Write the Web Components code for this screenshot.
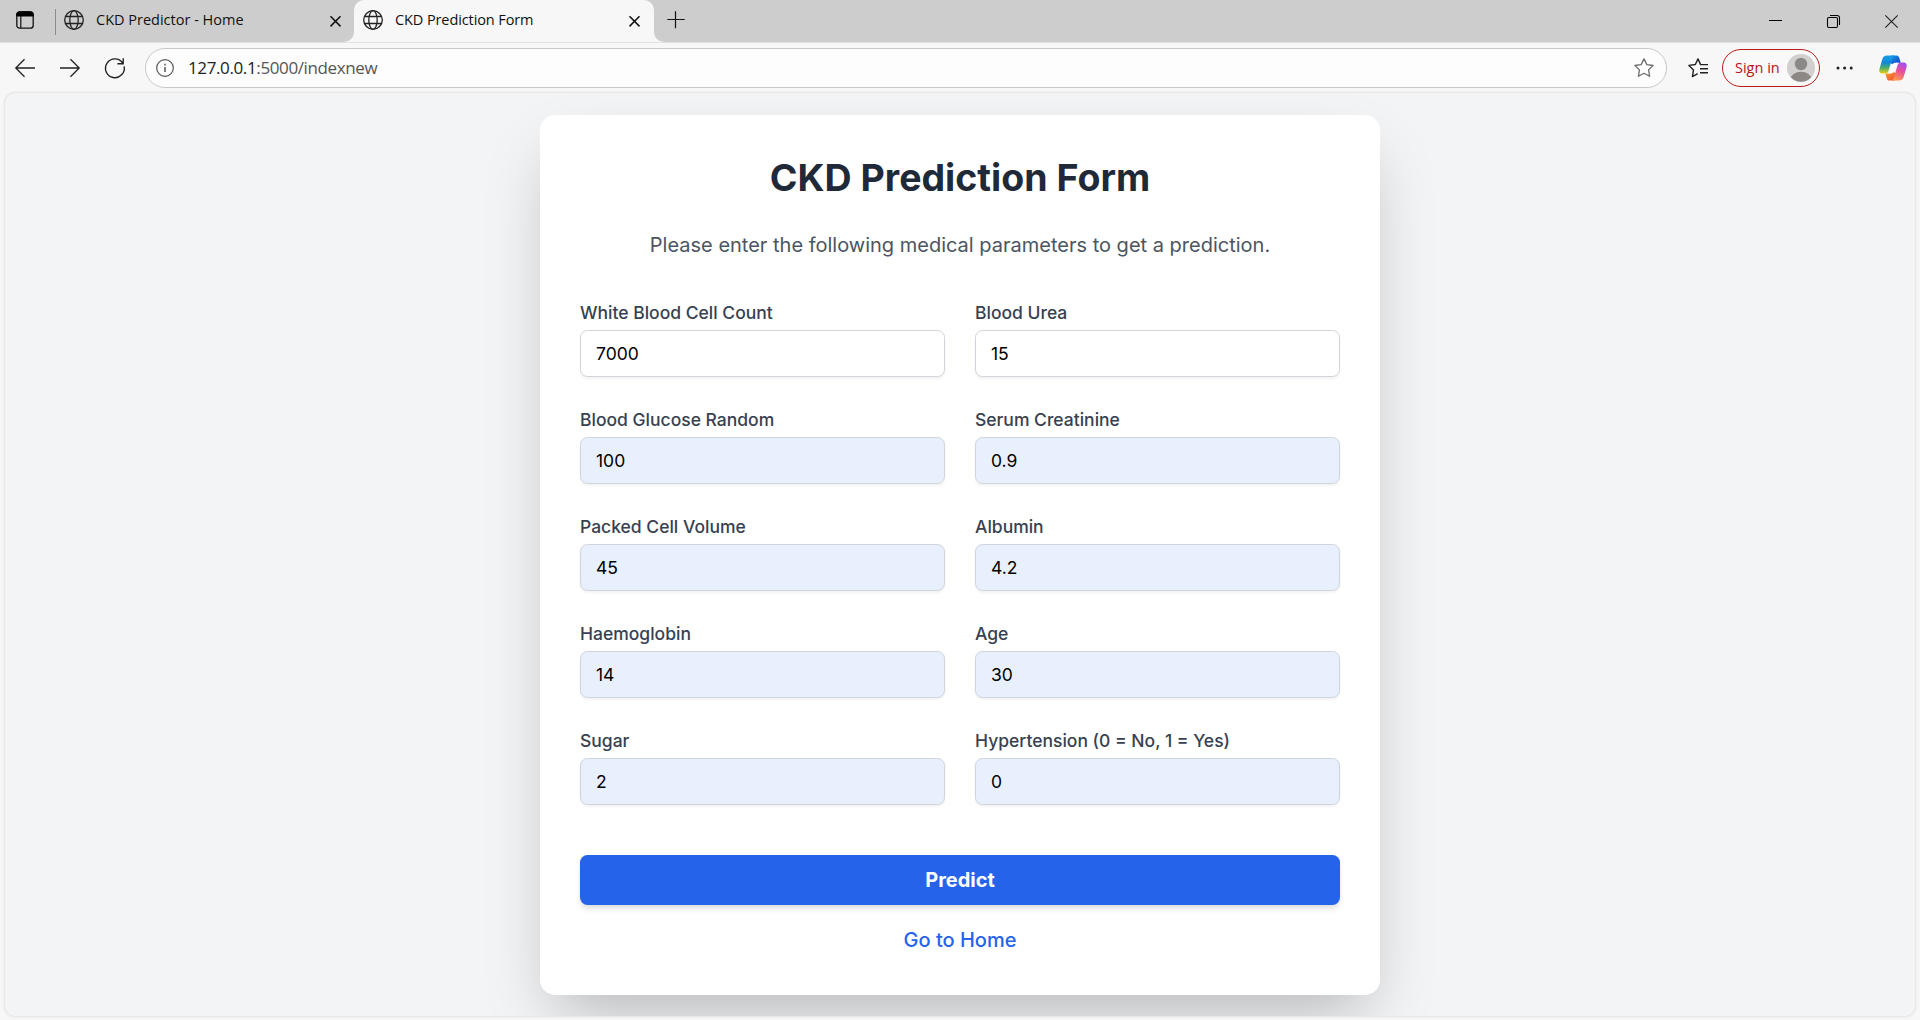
<!DOCTYPE html>
<html lang="en">
<head>
<meta charset="utf-8">
<title>CKD Prediction Form</title>
<style>
html,body{margin:0;height:100%;overflow:hidden;background:#f7f7f7}
</style>
</head>
<body>
<browser-window>
  <tab-strip slot="tabs">
    <browser-tab>CKD Predictor - Home</browser-tab>
    <browser-tab active>CKD Prediction Form</browser-tab>
  </tab-strip>
  <tool-bar slot="toolbar"><address-bar><span slot="host">127.0.0.1</span>:5000/indexnew</address-bar></tool-bar>
  <prediction-card>
    <span slot="title">CKD Prediction Form</span>
    <span slot="intro">Please enter the following medical parameters to get a prediction.</span>
    <form-field label="White Blood Cell Count">7000</form-field>
    <form-field label="Blood Urea">15</form-field>
    <form-field label="Blood Glucose Random" filled>100</form-field>
    <form-field label="Serum Creatinine" filled>0.9</form-field>
    <form-field label="Packed Cell Volume" filled>45</form-field>
    <form-field label="Albumin" filled>4.2</form-field>
    <form-field label="Haemoglobin" filled>14</form-field>
    <form-field label="Age" filled>30</form-field>
    <form-field label="Sugar" filled>2</form-field>
    <form-field label="Hypertension (0 = No, 1 = Yes)" filled>0</form-field>
    <submit-button slot="actions">Predict</submit-button>
    <home-link slot="actions">Go to Home</home-link>
  </prediction-card>
</browser-window>
<script>
const define = (name, markup, ready) => customElements.define(name, class extends HTMLElement {
  constructor() {
    super();
    this.attachShadow({mode: 'open'}).innerHTML = '<style>:host{display:block;box-sizing:border-box}*{box-sizing:border-box}svg{display:block;flex:none;overflow:visible}</style>' + markup;
  }
  connectedCallback() { if (ready) ready(this, this.shadowRoot); }
});

define('browser-window', `
<style>
:host{display:flex;flex-direction:column;width:1920px;height:1020px;background:#f7f7f7;font-family:"Open Sans","Noto Sans",sans-serif}
main{margin:0 5px 4px;flex:1;min-height:0;display:flex;align-items:flex-start;justify-content:center;padding-top:22px;background:#f3f4f6;border-radius:10px;overflow:hidden;box-shadow:0 0 2px 1px #e2e2e2}
</style>
<slot name="tabs"></slot><slot name="toolbar"></slot><main><slot></slot></main>`);

define('tab-strip', `
<style>
:host{display:flex;height:42px;background:#f7f7f7}
.lead{display:flex;align-items:center;width:56px;background:#cdcdcd;padding:0 0 2px 16px}
.lead i{width:1px;height:26px;background:#8b8b8b;margin:3px 0 0 21px}
.rest{flex:1;background:#cdcdcd;border-bottom-left-radius:10px;display:flex;padding:11px 0 0 13px}
.controls{display:flex;margin-left:auto;gap:45px;padding:4px 22px 0 0}
</style>
<div class="lead"><svg width="18" height="18" viewBox="0 0 18 18"><rect x=".8" y=".8" width="16.4" height="16.4" rx="2.8" fill="none" stroke="#111" stroke-width="1.3"/><path d="M.8 5V3.5A2.7 2.7 0 0 1 3.5.8h11a2.7 2.7 0 0 1 2.7 2.7V5z" fill="#000" stroke="#000"/><path d="M4.8 5v12" stroke="#111" stroke-width="1.2"/></svg><i></i></div>
<slot></slot>
<div class="rest"><svg width="18" height="18" viewBox="0 0 18 18"><path d="M8.5 .3v17M.3 8.5h17.4" stroke="#111" stroke-width="1.2"/></svg>
<div class="controls">
<svg width="13" height="13"><path d="M0 5.5h13" stroke="#000"/></svg>
<svg width="13" height="13" viewBox="0 0 13 13"><rect x=".5" y="2.5" width="10" height="10" rx="1.4" fill="none" stroke="#000" stroke-width="1.1"/><path d="M3 .5h7.2a2.3 2.3 0 0 1 2.3 2.3V10" fill="none" stroke="#000" stroke-width="1.1"/></svg>
<svg width="13" height="13" viewBox="0 0 13 13"><path d="m.3.3 12.4 12.4m0-12.4L.3 12.7" stroke="#222" stroke-width="1.1"/></svg>
</div></div>`);

define('browser-tab', `
<style>
:host{display:flex;width:298px;background:#cdcdcd;border-bottom-right-radius:10px;letter-spacing:0}
:host([active]){width:300px;border-radius:0;background:linear-gradient(#cdcdcd 50%,#f7f7f7 50%);letter-spacing:-.1px}
.tab{flex:1;display:flex;align-items:flex-start;padding:10px 13px 0 8px}
:host([active]) .tab{background:#f7f7f7;border-radius:10px 10px 0 0;padding-left:9px;padding-right:14px}
p{margin:0 auto 0 12px;font-size:14.5px;line-height:20px;color:#111;white-space:nowrap}
.x{margin-top:6px}
</style>
<div class="tab">
<svg width="20" height="20" viewBox="0 0 20 20" fill="none" stroke="#222" stroke-width="1.3"><circle cx="10" cy="10" r="9.3"/><ellipse cx="10" cy="10" rx="4.2" ry="9.3"/><path d="M1.7 6.5h16.6M1.7 13.5h16.6"/></svg>
<p><slot></slot></p>
<svg class="x" width="11" height="11" viewBox="0 0 11 11"><path d="m.5.2 10 10.2m0-10.2L.5 10.4" stroke="#111" stroke-width="1.5"/></svg>
</div>`);

define('tool-bar', `
<style>
:host{display:flex;align-items:center;height:51px;padding:0 13px 0 15px;border-top:1px solid #e2e2e2}
.nav{display:flex;gap:25px;margin-right:20px}
.fav{margin:0 14px 0 21px}
.sign{display:flex;align-items:center;justify-content:space-between;width:98px;height:38px;border:1px solid #b91c1c;border-radius:19px;padding:0 4px 0 12px;color:#b3141b;font-size:14.5px;white-space:nowrap;background:#f9f9f9}
.sign span{padding-bottom:2px}
.dots{margin:0 26px 0 16px}
</style>
<div class="nav">
<svg width="20" height="20" viewBox="0 0 20 20" fill="none" stroke="#222" stroke-width="1.3"><path d="M20 10H.8M9.5 1.3.8 10l8.7 8.7"/></svg>
<svg width="20" height="20" viewBox="0 0 20 20" fill="none" stroke="#222" stroke-width="1.3"><path d="M0 10h19.2M10.5 1.3l8.7 8.7-8.7 8.7"/></svg>
<svg width="20" height="20" viewBox="0 0 20 20" fill="none" stroke="#222" stroke-width="1.4"><path d="M19.1 8.3A9.4 9.4 0 1 1 17.7 5M18.2.2v5.5h-5.8"/></svg>
</div>
<slot></slot>
<svg class="fav" width="20" height="20" viewBox="0 0 20 20" fill="none" stroke="#222" stroke-width="1.4" stroke-linejoin="round"><path d="M13.8 6.6H12.6L10 .9 7.3 6.5.9 7.4l4.6 4.5-1.1 6.7 5.3-2.9M13.3 6.6H20M12 10.7h8M12 14.7h8"/></svg>
<div class="sign"><span>Sign in</span><svg width="28" height="28" viewBox="0 0 28 28"><defs><clipPath id="a"><circle cx="14" cy="14" r="13.7"/></clipPath></defs><circle cx="14" cy="14" r="14" fill="#d2d0ce"/><g clip-path="url(#a)" fill="#8b8886"><circle cx="14" cy="10" r="6.2"/><ellipse cx="14" cy="25.5" rx="10.5" ry="7.8"/></g></svg></div>
<svg class="dots" width="17" height="4" viewBox="0 0 17 4"><g fill="#222"><circle cx="2" cy="2" r="1.5"/><circle cx="8.6" cy="2" r="1.5"/><circle cx="15.2" cy="2" r="1.5"/></g></svg>
<svg width="28" height="26" viewBox="0 0 28 26"><defs>
<linearGradient id="b" x1="0" y1="0" x2="0" y2="1"><stop stop-color="#159ee8"/><stop offset=".4" stop-color="#1387d8"/><stop offset=".68" stop-color="#4bad68"/><stop offset="1" stop-color="#f5cf18"/></linearGradient>
<linearGradient id="c" x1=".7" y1="0" x2=".3" y2="1"><stop stop-color="#a052ee"/><stop offset=".45" stop-color="#e84f9c"/><stop offset="1" stop-color="#ff9b4b"/></linearGradient>
<linearGradient id="d" x1="0" y1="0" x2="1" y2="1"><stop stop-color="#159ee8"/><stop offset="1" stop-color="#1737c8"/></linearGradient>
<linearGradient id="e" x1="0" y1="0" x2="1" y2="1"><stop stop-color="#f7a823"/><stop offset="1" stop-color="#f04438"/></linearGradient></defs>
<path d="M12 .5h5.6c1.6 0 2.2 1 2.7 2.6l1.4 4.6h-3.5c-1.8 0-2.8.6-3.6 2l-4-2z" fill="url(#d)"/>
<path d="M16 25.5h-5.6c-1.6 0-2.4-1-2.8-2.6l-1.3-4.5h3.5c1.8 0 2.6-.5 3.4-2l4 2z" fill="url(#e)"/>
<path d="M8 .5h7.5c-1.5.6-2 2.2-2.7 4.5L9.6 15.4c-.7 2.3-1.6 3.2-3.8 3.2H3.7c-3.1 0-4-2.2-3.1-5.2L3.4 4C4.1 1.7 5.4.5 8 .5z" fill="url(#b)"/>
<path d="M20 25.5h-7.4c1.5-.6 2-2.2 2.7-4.5l3.1-10.2c.7-2.4 1.6-3.3 3.8-3.3h2.1c3.1 0 4 2.2 3.1 5.2L24.6 22c-.7 2.3-2 3.5-4.6 3.5z" fill="url(#c)"/>
<path d="M18.6 7.7h-2.2c-2 0-2.9.9-3.5 2.8l-1.7 5.4c-.3 1.1-.7 1.9-1.4 2.5h2.1c2 0 2.8-.9 3.4-2.8l1.8-5.4c.4-1.2.8-2 1.5-2.5z" fill="#fbfbfb"/></svg>`);

define('address-bar', `
<style>
:host{display:flex;align-items:center;flex:1;height:40px;border:1px solid #c8c8c8;border-radius:20px;background:#fdfdfd;padding:0 12px 0 10px}
p{margin:0 auto 0 14px;font-size:17px;line-height:24px;letter-spacing:-.38px;color:#555;white-space:nowrap}
b{font-weight:400;color:#222}
</style>
<svg width="18" height="18" viewBox="0 0 18 18"><circle cx="9" cy="9" r="8.3" fill="none" stroke="#555" stroke-width="1.2"/><path d="M9 8v5M9 4.8v1.6" stroke="#555" stroke-width="1.5"/></svg>
<p><b><slot name="host"></slot></b><slot></slot></p>
<svg width="20" height="20" viewBox="0 0 20 20"><path d="m10 .9 2.8 5.7 6.3.9-4.5 4.4 1 6.4-5.6-3-5.6 3 1-6.4L.9 7.5l6.3-.9z" fill="none" stroke="#6d6d6d" stroke-width="1.3" stroke-linejoin="round"/></svg>`);

define('prediction-card', `
<style>
:host{flex:none;width:840px;height:880px;padding:40px;background:#fff;border-radius:15px;box-shadow:0 31.25px 62.5px -15px rgba(0,0,0,.25);font-family:Inter,"Liberation Sans",sans-serif;text-align:center}
h1{margin:0 0 30px;font-size:37.5px;line-height:45px;font-weight:700;color:#1f2937}
p{margin:0 0 40px;font-size:20px;line-height:30px;color:#4b5563}
.grid{display:grid;grid-template-columns:1fr 1fr;gap:30px}
.actions{display:flex;flex-direction:column;gap:20px;margin-top:50px}
</style>
<h1><slot name="title"></slot></h1><p><slot name="intro"></slot></p>
<div class="grid"><slot></slot></div>
<div class="actions"><slot name="actions"></slot></div>`);

define('form-field', `
<style>
:host{text-align:left;font-size:17.5px;line-height:25px}
label{display:block;font-weight:500;color:#374151;margin-bottom:5px}
.box{height:47px;padding:10px 15px;border:1px solid #d1d5db;border-radius:7.5px;background:#fff;color:#000;box-shadow:0 1.25px 2.5px rgba(0,0,0,.05)}
:host([filled]) .box{background:#e8f0fe}
</style>
<label></label><div class="box" role="textbox"><slot></slot></div>`, (el, root) => { root.querySelector('label').textContent = el.getAttribute('label'); });

define('submit-button', `
<style>
:host{height:50px;padding:10px;border-radius:7.5px;background:#2563eb;color:#fff;font-size:20px;line-height:30px;font-weight:700;box-shadow:0 5px 7.5px -1.25px rgba(0,0,0,.1),0 2.5px 5px -2.5px rgba(0,0,0,.1)}
</style><slot></slot>`);

define('home-link', `
<style>:host{color:#2563eb;font-size:20px;line-height:30px;font-weight:500}</style><slot></slot>`);
</script>
</body>
</html>
